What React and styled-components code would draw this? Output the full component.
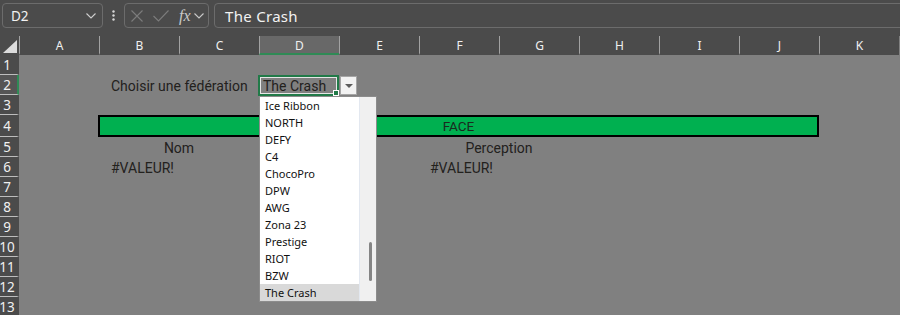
import React from 'react';
import styled, { createGlobalStyle } from 'styled-components';

const GlobalStyle = createGlobalStyle`
    html, body {
        margin: 0;
        padding: 0;
        background: #808080;
        overflow: hidden;
    }
`;

const Window = styled.div`
    width: 900px;
    height: 315px;
    overflow: hidden;
    background: #808080;
    font-family: "Noto Sans", "Open Sans", sans-serif;
`;

const FormulaBar = styled.div`
    height: 36px;
    box-sizing: border-box;
    padding: 3px 0 0 2px;
    background: #4b4b4b;
    display: flex;
    align-items: flex-start;
    overflow: hidden;
`;

const Box = styled.div`
    height: 25px;
    box-sizing: border-box;
    border: 1px solid #6c6c6c;
    border-radius: 4px;
    display: flex;
    align-items: center;
    flex-shrink: 0;
    width: ${p => p.$w ? `${p.$w}px` : 'auto'};
    flex-grow: ${p => p.$grow ? 1 : 0};
    margin-right: ${p => p.$grow ? '-10px' : '0'};
`;

const NameText = styled.span`
    color: #f2f2f2;
    font-size: 13.5px;
    padding-left: 8px;
    flex: 1;
`;

const FormulaText = styled.span`
    color: #f2f2f2;
    font-size: 15px;
    letter-spacing: 0.3px;
    padding-left: 10px;
`;

const Kebab = styled.div`
    width: 21px;
    height: 25px;
    display: flex;
    align-items: center;
    justify-content: center;
`;

const Spacer = styled.div`
    width: ${p => p.$w}px;
    flex-shrink: 0;
`;

const Sheet = styled.div`
    display: grid;
    grid-template-columns: 19px repeat(11, 80px);
    grid-template-rows: 19px 20px 20px 20px 22px repeat(9, 20px);
    background: #808080;
`;

const Corner = styled.div`
    grid-column: 1;
    grid-row: 1;
    background: #4b4b4b;
    display: flex;
    align-items: flex-end;
    justify-content: flex-end;
    padding: 0 2px 2px 0;
`;

const ColHeader = styled.div`
    grid-row: 1;
    background: ${p => p.$active ? '#686868' : '#4b4b4b'};
    border-left: 1px solid #a2a2a2;
    border-bottom: 2px solid ${p => p.$active ? '#2f8a55' : '#4b4b4b'};
    box-sizing: border-box;
    color: #f0f0f0;
    font-size: 12px;
    display: flex;
    align-items: center;
    justify-content: center;
    padding-top: 1px;
`;

const RowHeader = styled.div`
    grid-column: 1;
    background: ${p => p.$active ? '#555555' : '#4b4b4b'};
    border-bottom: 1px solid #bdbdbd;
    border-right: 2px solid ${p => p.$active ? '#2f8a55' : '#4b4b4b'};
    box-sizing: border-box;
    color: #f0f0f0;
    font-size: 13.5px;
    display: flex;
    align-items: center;
    justify-content: center;
    padding-right: 3px;
`;

const Cell = styled.div`
    position: relative;
    color: #23211d;
    font-family: Roboto, "Noto Sans", sans-serif;
    font-size: 14px;
    display: flex;
    align-items: center;
    white-space: nowrap;
    padding-top: 2px;
    box-sizing: border-box;
    padding-left: ${p => p.$pad || 0}px;
    justify-content: ${p => p.$center ? 'center' : 'flex-start'};
`;

const Banner = styled.div`
    grid-row: 5;
    grid-column: 3 / 12;
    margin-left: -1px;
    background: #00b050;
    border: 2px solid #000;
    box-sizing: border-box;
    color: #1b2a1f;
    font-family: Roboto, "Noto Sans", sans-serif;
    font-size: 13.5px;
    display: flex;
    align-items: center;
    justify-content: center;
`;

const Selection = styled.div`
    position: absolute;
    left: -1px;
    top: 0;
    right: 0;
    bottom: -1px;
    border: 2px solid #217a48;
    box-shadow: inset 0 0 0 1px #e6e6e6;
    pointer-events: none;
`;

const Handle = styled.div`
    position: absolute;
    right: -2px;
    bottom: -2px;
    width: 4px;
    height: 4px;
    background: #217a48;
    border: 1px solid #fff;
`;

const DropButton = styled.div`
    position: absolute;
    left: 81px;
    top: 1px;
    width: 17px;
    height: 19px;
    box-sizing: border-box;
    background: #f2f2f2;
    border: 1px solid #a5a5a5;
    display: flex;
    align-items: center;
    justify-content: center;
`;

const DropList = styled.div`
    position: absolute;
    left: 0;
    top: 21px;
    width: 118px;
    height: 206px;
    box-sizing: border-box;
    background: #fff;
    border: 1px solid #8c8c8c;
    display: flex;
    z-index: 5;
`;

const Options = styled.div`
    flex: 1;
    display: flex;
    flex-direction: column;
`;

const Option = styled.div`
    height: 17px;
    line-height: 17px;
    padding-left: 5px;
    font-family: "Noto Sans", "Open Sans", sans-serif;
    font-size: 11px;
    color: #111;
    background: ${p => p.$selected ? '#d9d9d9' : 'transparent'};
`;

const Track = styled.div`
    width: 17px;
    background: #f0f0f0;
    border-left: 1px solid #e3e8f0;
    box-sizing: border-box;
    display: flex;
    justify-content: center;
    padding-left: 4px;
`;

const Thumb = styled.div`
    width: 3px;
    height: 39px;
    margin-top: 145px;
    border-radius: 2px;
    background: #858585;
`;

const columns = ['A', 'B', 'C', 'D', 'E', 'F', 'G', 'H', 'I', 'J', 'K'];
const rowHeights = [20, 20, 20, 22, 20, 20, 20, 20, 20, 20, 20, 20, 20];

const federations = [
    'Ice Ribbon', 'NORTH', 'DEFY', 'C4', 'ChocoPro', 'DPW',
    'AWG', 'Zona 23', 'Prestige', 'RIOT', 'BZW', 'The Crash',
];

const Chevron = ({ color = '#cfcfcf' }) => (
    <svg width="10" height="6" viewBox="0 0 10 6">
        <path d="M0.5 0.5 L5 5 L9.5 0.5" fill="none" stroke={color} strokeWidth="1.1" />
    </svg>
);

const App = () => {
    return (
        <Window>
            <GlobalStyle />
            <FormulaBar>
                <Box $w={101}>
                    <NameText>D2</NameText>
                    <span style={{ paddingRight: 6, display: 'flex' }}><Chevron /></span>
                </Box>
                <Kebab>
                    <svg width="3" height="11" viewBox="0 0 3 11">
                        <circle cx="1.5" cy="1.5" r="1.2" fill="#d8d8d8" />
                        <circle cx="1.5" cy="5.5" r="1.2" fill="#d8d8d8" />
                        <circle cx="1.5" cy="9.5" r="1.2" fill="#d8d8d8" />
                    </svg>
                </Kebab>
                <Box $w={85}>
                    <Spacer $w={6} />
                    <svg width="12" height="12" viewBox="0 0 12 12">
                        <path d="M0.5 0.5 L11.5 11.5 M11.5 0.5 L0.5 11.5" stroke="#7c7c7c" strokeWidth="1.1" />
                    </svg>
                    <Spacer $w={10} />
                    <svg width="16" height="12" viewBox="0 0 16 12">
                        <path d="M0.5 6 L5.5 11 L15.5 0.5" fill="none" stroke="#7c7c7c" strokeWidth="1.1" />
                    </svg>
                    <Spacer $w={10} />
                    <span style={{ fontFamily: '"Liberation Serif", serif', fontStyle: 'italic', fontSize: 16, color: '#c9c9c9', lineHeight: 1 }}>fx</span>
                    <Spacer $w={3} />
                    <Chevron color="#c9c9c9" />
                </Box>
                <Spacer $w={5} />
                <Box $grow>
                    <FormulaText>The Crash</FormulaText>
                </Box>
            </FormulaBar>
            <Sheet>
                <Corner>
                    <svg width="14" height="13" viewBox="0 0 14 13">
                        <polygon points="14,0 14,13 0,13" fill="#dcdcdc" />
                    </svg>
                </Corner>
                {columns.map((c, i) => (
                    <ColHeader key={c} $active={c === 'D'} style={{ gridColumn: i + 2 }}>{c}</ColHeader>
                ))}
                {rowHeights.map((h, i) => (
                    <RowHeader key={i} $active={i === 1} style={{ gridRow: i + 2 }}>{i + 1}</RowHeader>
                ))}

                <Cell $pad={12} style={{ gridRow: 3, gridColumn: '3 / 5' }}>Choisir une fédération</Cell>
                <Cell $pad={4} style={{ gridRow: 3, gridColumn: 5 }}>
                    The Crash
                    <Selection><Handle /></Selection>
                    <DropButton>
                        <svg width="8" height="4" viewBox="0 0 8 4">
                            <polygon points="0,0 8,0 4,4" fill="#5c5c5c" />
                        </svg>
                    </DropButton>
                    <DropList>
                        <Options>
                            {federations.map(f => (
                                <Option key={f} $selected={f === 'The Crash'}>{f}</Option>
                            ))}
                        </Options>
                        <Track><Thumb /></Track>
                    </DropList>
                </Cell>

                <Banner>FACE</Banner>

                <Cell $center style={{ gridRow: 6, gridColumn: '3 / 5' }}>Nom</Cell>
                <Cell $center style={{ gridRow: 6, gridColumn: '7 / 9' }}>Perception</Cell>
                <Cell $pad={12} style={{ gridRow: 7, gridColumn: 3 }}>#VALEUR!</Cell>
                <Cell $pad={11} style={{ gridRow: 7, gridColumn: 7 }}>#VALEUR!</Cell>
            </Sheet>
        </Window>
    );
};

export default App;
